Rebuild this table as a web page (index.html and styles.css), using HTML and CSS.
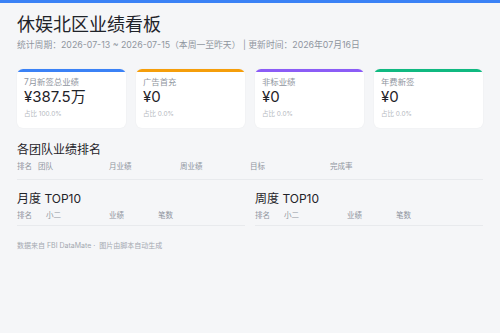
FILE: index.html
```html
<!DOCTYPE html>
<html lang="zh">
<head>
<meta charset="utf-8">
<link rel="stylesheet" href="styles.css">
</head>
<body>
<div class="topbar"></div>
<main class="page">
  <header class="head">
    <h1 class="title">休娱北区业绩看板</h1>
    <p class="sub">统计周期：2026-07-13 ~ 2026-07-15（本周一至昨天） | 更新时间：2026年07月16日</p>
  </header>

  <section class="cards">
    <div class="card c-blue">
      <div class="bar"></div>
      <div class="c-body">
        <div class="c-label">7月新签总业绩</div>
        <div class="c-value">¥387.5万</div>
        <div class="c-note">占比 100.0%</div>
      </div>
    </div>
    <div class="card c-orange">
      <div class="bar"></div>
      <div class="c-body">
        <div class="c-label">广告首充</div>
        <div class="c-value">¥0</div>
        <div class="c-note">占比 0.0%</div>
      </div>
    </div>
    <div class="card c-purple">
      <div class="bar"></div>
      <div class="c-body">
        <div class="c-label">非标业绩</div>
        <div class="c-value">¥0</div>
        <div class="c-note">占比 0.0%</div>
      </div>
    </div>
    <div class="card c-green">
      <div class="bar"></div>
      <div class="c-body">
        <div class="c-label">年费新签</div>
        <div class="c-value">¥0</div>
        <div class="c-note">占比 0.0%</div>
      </div>
    </div>
  </section>

  <section class="block">
    <h2 class="sec-title">各团队业绩排名</h2>
    <div class="thead team">
      <span>排名</span><span>团队</span><span>月业绩</span><span>周业绩</span><span>目标</span><span>完成率</span>
    </div>
  </section>

  <section class="two">
    <div class="col">
      <h2 class="sec-title">月度 TOP10</h2>
      <div class="thead top">
        <span>排名</span><span>小二</span><span>业绩</span><span>笔数</span>
      </div>
    </div>
    <div class="col">
      <h2 class="sec-title">周度 TOP10</h2>
      <div class="thead top">
        <span>排名</span><span>小二</span><span>业绩</span><span>笔数</span>
      </div>
    </div>
  </section>

  <footer class="foot">数据来自 FBI DataMate · &nbsp;图片由脚本自动生成</footer>
</main>
</body>
</html>
```

FILE: styles.css
```css
* { box-sizing: border-box; margin: 0; padding: 0; }
html, body { background: #f5f6f8; }
body {
  font-family: "Inter", "Noto Sans CJK SC", "Noto Sans", sans-serif;
  color: #1f2329;
  width: 500px;
  height: 333px;
  overflow: hidden;
}
.topbar { height: 3px; background: #3b82f6; }
.page { padding: 10px 17px 0 17px; }

.title {
  font-size: 18px;
  line-height: 24px;
  font-weight: 400;
  color: #1f2329;
}
.sub {
  margin-top: 1px;
  font-size: 8.8px;
  line-height: 13px;
  color: #8f959e;
}

.cards {
  margin-top: 18px;
  display: grid;
  grid-template-columns: repeat(4, 1fr);
  gap: 10px;
}
.card {
  background: #fff;
  border-radius: 6px;
  height: 59px;
  overflow: hidden;
  box-shadow: 0 0 2px rgba(0,0,0,0.05);
}
.bar { height: 3px; border-radius: 2px 2px 0 0; }
.c-blue .bar { background: #3b82f6; }
.c-orange .bar { background: #f59e0b; }
.c-purple .bar { background: #8b5cf6; }
.c-green .bar { background: #10b981; }
.c-body { padding: 5px 7px 8px 7px; }
.c-label { font-size: 8.4px; line-height: 11px; color: #8f959e; }
.c-value { font-size: 15px; line-height: 18px; color: #1f2329; }
.c-note { margin-top: 4px; font-size: 6.5px; line-height: 9px; color: #b5b9c0; }

.block { margin-top: 14px; }
.sec-title {
  font-size: 12px;
  line-height: 16px;
  font-weight: 400;
  color: #1f2329;
}
.thead {
  display: grid;
  margin-top: 3px;
  font-size: 7.5px;
  line-height: 11px;
  color: #8f959e;
  border-bottom: 1px solid #e8eaed;
}
.team {
  grid-template-columns: 21px 71px 71px 70px 80px 1fr;
  padding-bottom: 7px;
}
.top {
  grid-template-columns: 29px 63px 49px 1fr;
  padding-bottom: 4px;
}

.two {
  margin-top: 11px;
  display: grid;
  grid-template-columns: 1fr 1fr;
  gap: 10px;
}

.foot {
  margin-top: 15px;
  font-size: 7px;
  line-height: 10px;
  color: #a3a8b0;
}
```
